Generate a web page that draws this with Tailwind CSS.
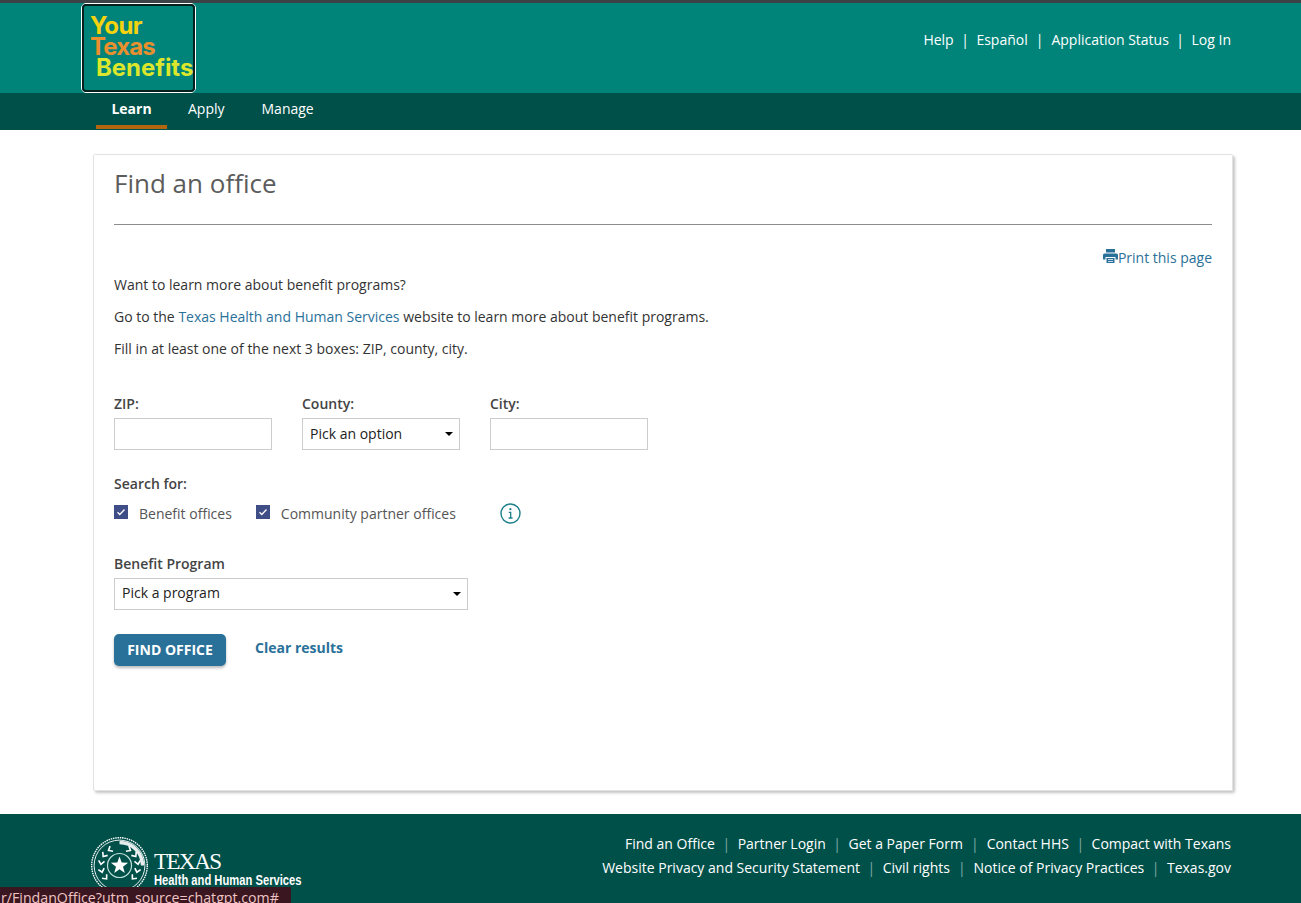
<!DOCTYPE html>
<html lang="en">
<head>
<meta charset="utf-8">
<title>Find an office</title>
<script src="https://cdn.jsdelivr.net/npm/@tailwindcss/browser@4"></script>
</head>
<body class="font-['Open_Sans',sans-serif] text-[14px] text-[#333] bg-white">
<div class="relative h-[903px] overflow-hidden">
  <header class="h-[93px] bg-[#00847a] border-t-[3px] border-[#3b4145] pl-[81px] pr-[70px] flex justify-between">
    <a class="block w-[115px] h-[90px] rounded-[5px] border border-white">
      <div class="h-full bg-[#00847a] rounded-[4px] border-2 border-[#06201e] font-['Inter',sans-serif] font-bold text-[24px] leading-[21px] tracking-[-0.6px] pt-[9px] pl-[6px] whitespace-nowrap">
        <div class="text-[#f4d20f]">Your</div>
        <div class="text-[#e98f2e] tracking-[-0.9px]">Texas</div>
        <div class="text-[#dbe62c] pl-[6px] tracking-[-0.05px]">Benefits</div>
      </div>
    </a>
    <nav class="flex items-center h-[72px] text-white">
      <a>Help</a><span class="mx-[7.5px]">|</span><a>Español</a><span class="mx-[8px]">|</span><a>Application Status</a><span class="mx-[7.5px]">|</span><a>Log In</a>
    </nav>
  </header>
  <nav class="h-[37px] bg-[#00504a] pl-[96px] flex text-white">
    <a class="w-[71px] h-[36px] border-b-[4px] border-[#b4650f] font-bold flex items-center justify-center pb-[2px]">Learn</a>
    <a class="ml-[21px] h-[30px] flex items-center">Apply</a>
    <a class="ml-[37px] h-[30px] flex items-center">Manage</a>
  </nav>
  <main class="ml-[93px] mt-[24px] w-[1140px] h-[637px] border border-[#e2e2e2] rounded-[2px] shadow-[2px_2px_3px_#c4c4c4] px-[20px]">
    <h1 class="text-[26px] leading-[36px] text-[#5c5c5c] mt-[10px]">Find an office</h1>
    <hr class="mt-[23px] border-[#8c8c8c]">
    <div class="flex justify-end mt-[22px] h-[20px] text-[#2a7199]">
      <a class="flex items-center">
        <svg class="w-[15px] h-[14px] mb-[3px]" viewBox="0 0 15 14" fill="#2a7199"><path d="M3 0h9v3.5H3zM1.5 4.5h12a1.5 1.5 0 0 1 1.5 1.5v4.500h-2.500V8h-10v2.500H0V6a1.500 1.500 0 0 1 1.500-1.500z"/><path d="M3.500 9h8v5h-8zM5 10.300v.8h5v-.8zM5 12v.8h5V12z" fill-rule="evenodd"/></svg>
        <span>Print this page</span>
      </a>
    </div>
    <p class="mt-[8px] leading-[20px]">Want to learn more about benefit programs?</p>
    <p class="mt-[12px] leading-[20px]">Go to the <a class="text-[#2a7199]">Texas Health and Human Services</a> website to learn more about benefit programs.</p>
    <p class="mt-[12px] leading-[20px]">Fill in at least one of the next 3 boxes: ZIP, county, city.</p>
    <form class="mt-[35px]">
      <div class="flex gap-[30px]">
        <div class="w-[158px]">
          <div class="font-semibold leading-[20px] h-[24px] text-[#444]">ZIP:</div>
          <div class="h-[32px] border border-[#ccc]"></div>
        </div>
        <div class="w-[158px]">
          <div class="font-semibold leading-[20px] h-[24px] text-[#444]">County:</div>
          <div class="h-[32px] border border-[#ccc] flex items-center justify-between pl-[7px] pr-[6px] pb-[2px] text-[#222]">
            <span>Pick an option</span>
            <span class="w-0 h-0 border-x-[4px] border-x-transparent border-t-[4px] border-t-black mt-[2px]"></span>
          </div>
        </div>
        <div class="w-[158px]">
          <div class="font-semibold leading-[20px] h-[24px] text-[#444]">City:</div>
          <div class="h-[32px] border border-[#ccc]"></div>
        </div>
      </div>
      <div class="font-semibold leading-[20px] mt-[24px] text-[#444]">Search for:</div>
      <div class="flex items-center h-[20px] mt-[9px] text-[#555]">
        <span class="w-[14px] h-[14px] bg-[#3f4e87] flex items-center justify-center mb-[3px]">
          <svg class="w-[10px] h-[10px]" viewBox="0 0 10 10" fill="none" stroke="white" stroke-width="1.300"><path d="M1.500 5.200l2.300 2.300 4.700-5"/></svg>
        </span>
        <span class="ml-[11px]">Benefit offices</span>
        <span class="ml-[24px] w-[14px] h-[14px] bg-[#3f4e87] flex items-center justify-center mb-[3px]">
          <svg class="w-[10px] h-[10px]" viewBox="0 0 10 10" fill="none" stroke="white" stroke-width="1.300"><path d="M1.500 5.200l2.300 2.300 4.700-5"/></svg>
        </span>
        <span class="ml-[11px]">Community partner offices</span>
        <svg class="ml-[44px] w-[21px] h-[21px]" viewBox="0 0 21 21" fill="none" stroke="#1b7f8a"><circle cx="10.500" cy="10.500" r="9.500" stroke-width="1.400"/><path d="M8.800 9.300h1.900v5.500M8.600 15h4" stroke-width="1.300"/><circle cx="10.400" cy="6.200" r="1.100" fill="#1b7f8a" stroke="none"/></svg>
      </div>
      <div class="font-semibold leading-[20px] mt-[31px] text-[#444]">Benefit Program</div>
      <div class="w-[354px] h-[32px] mt-[4px] border border-[#ccc] flex items-center justify-between pl-[7px] pr-[6px] text-[#222]">
        <span class="mb-[3px]">Pick a program</span>
        <span class="w-0 h-0 border-x-[4px] border-x-transparent border-t-[4px] border-t-black"></span>
      </div>
      <div class="flex mt-[24px]">
        <a class="w-[112px] h-[32px] rounded-[5px] bg-[#2a7199] text-white font-bold flex items-center justify-center pb-[2px] shadow-[0_2px_3px_#bbb]">FIND OFFICE</a>
        <a class="ml-[29px] text-[#2a7199] font-bold leading-[28px]">Clear results</a>
      </div>
    </form>
  </main>
  <footer class="mt-[23px] h-[89px] bg-[#00504a] text-white pl-[90px] pr-[70px] flex justify-between">
    <div class="flex items-start pt-[22px]">
      <svg class="w-[59px] h-[59px] shrink-0" viewBox="0 0 59 59" fill="none" stroke="white">
        <circle cx="29.500" cy="29.500" r="27.800" stroke-width="1.400" stroke-dasharray="1.500 0.800"/>
        <circle cx="29.500" cy="29.500" r="25.400" stroke-width="0.900"/>
        <path d="M29.500 6.500a23 23 0 0 1 23 23" stroke-width="3.400" stroke-opacity="0.900"/>
        <circle cx="29.500" cy="29.500" r="12" stroke="#bfe0da" stroke-width="1.200"/>
        <polygon points="29.500,20.500 31.700,26.600 38.100,26.800 33,30.700 34.800,36.900 29.500,33.300 24.200,36.900 26,30.700 20.900,26.800 27.300,26.600" fill="white" stroke="none"/>
        <g stroke-width="1.600">
          <path transform="rotate(-30 29.500 29.500)" d="M31 8L27.500 11L31 14"/>
          <path transform="rotate(-55 29.500 29.500)" d="M31 8L27.500 11L31 14"/>
          <path transform="rotate(-80 29.500 29.500)" d="M31 8L27.500 11L31 14"/>
          <path transform="rotate(-105 29.500 29.500)" d="M31 8L27.500 11L31 14"/>
          <path transform="rotate(-130 29.500 29.500)" d="M31 8L27.500 11L31 14"/>
          <path transform="rotate(30 29.500 29.500)" d="M28 8L31.500 11L28 14"/>
          <path transform="rotate(55 29.500 29.500)" d="M28 8L31.500 11L28 14"/>
          <path transform="rotate(80 29.500 29.500)" d="M28 8L31.500 11L28 14"/>
          <path transform="rotate(105 29.500 29.500)" d="M28 8L31.500 11L28 14"/>
          <path transform="rotate(130 29.500 29.500)" d="M28 8L31.500 11L28 14"/>
        </g>
      </svg>
      <div class="ml-[5px] mt-[14px]">
        <div class="font-['Liberation_Serif',serif] text-[23px] leading-[23px] tracking-[-1.500px]">TEXAS</div>
        <div class="font-['Liberation_Sans',sans-serif] font-bold text-[14px] leading-[14px] whitespace-nowrap scale-x-[0.8] origin-left">Health and Human Services</div>
      </div>
    </div>
    <div class="pt-[18px] text-right leading-[24px] text-[14px]">
      <div><a>Find an Office</a><span class="mx-[7.5px] text-[#7fa8a4]">|</span><a>Partner Login</a><span class="mx-[7.5px] text-[#7fa8a4]">|</span><a>Get a Paper Form</a><span class="mx-[8px] text-[#7fa8a4]">|</span><a>Contact HHS</a><span class="mx-[7.5px] text-[#7fa8a4]">|</span><a>Compact with Texans</a></div>
      <div><a>Website Privacy and Security Statement</a><span class="mx-[7.5px] text-[#7fa8a4]">|</span><a>Civil rights</a><span class="mx-[8px] text-[#7fa8a4]">|</span><a>Notice of Privacy Practices</a><span class="mx-[7.5px] text-[#7fa8a4]">|</span><a>Texas.gov</a></div>
    </div>
  </footer>
  <div class="absolute left-0 bottom-0 w-[291px] h-[16px] bg-[#3a1620] text-[#f0c4c4] text-[14.200px] leading-[22px] whitespace-nowrap overflow-hidden pl-[1px]">r/FindanOffice?utm_source=chatgpt.com#</div>
</div>
</body>
</html>
